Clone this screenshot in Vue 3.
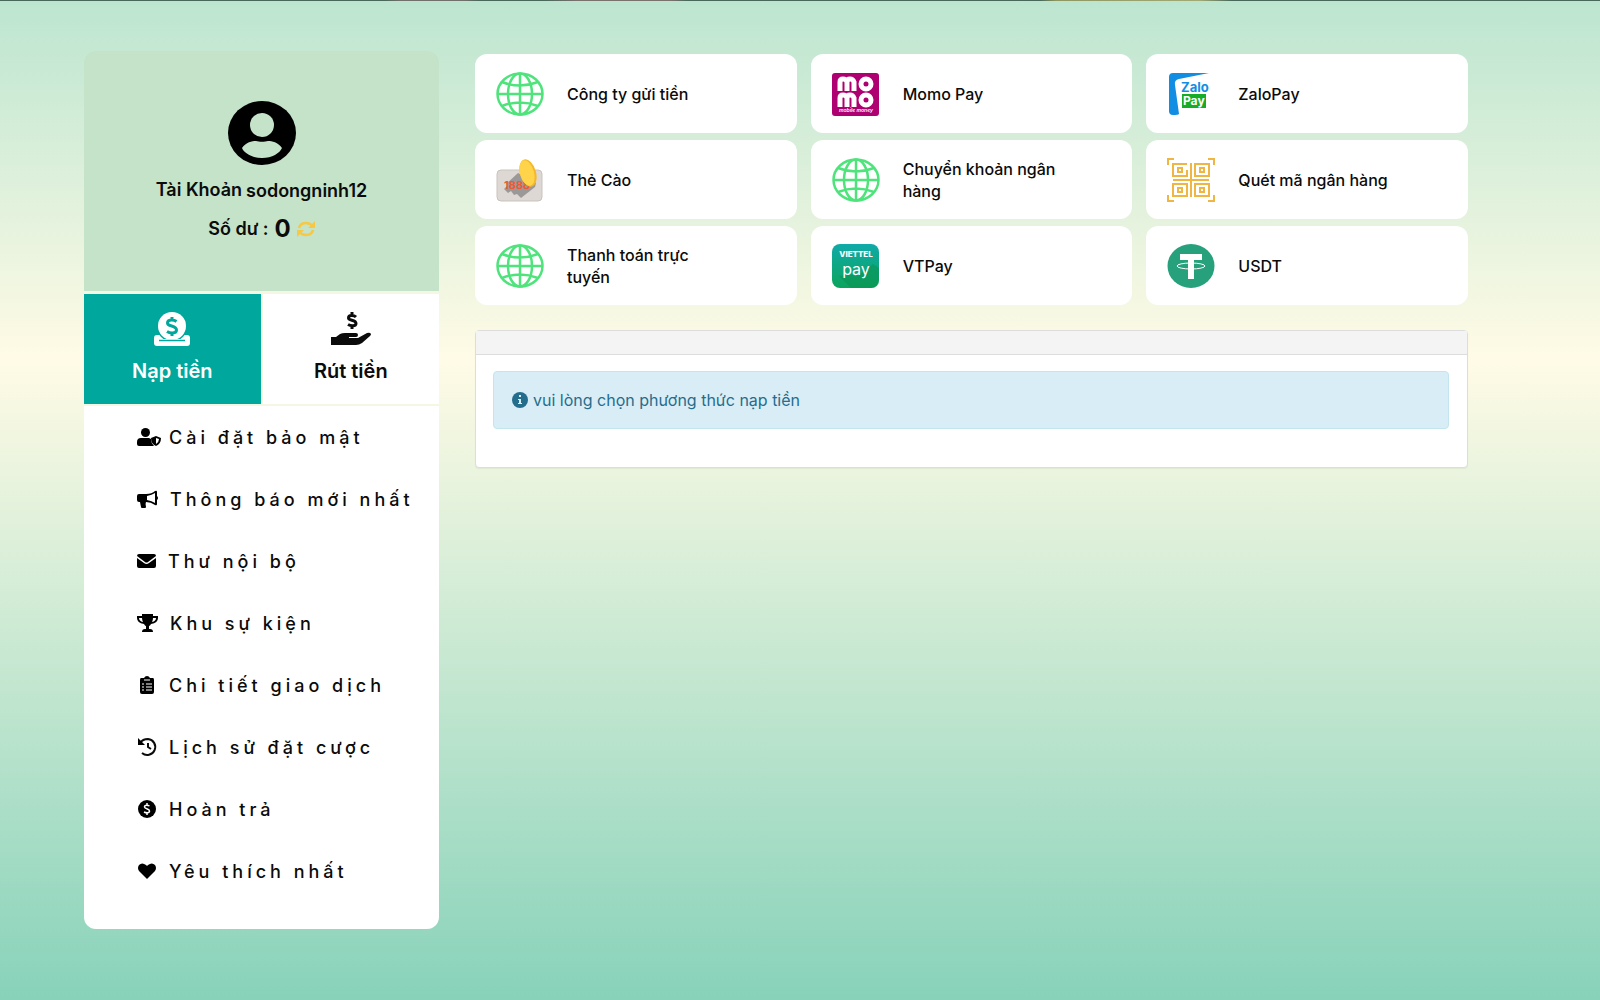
<script setup>
import { ref } from 'vue'

const methods = [
  { label: 'Công ty gửi tiền', icon: 'globe' },
  { label: 'Momo Pay', icon: 'momo' },
  { label: 'ZaloPay', icon: 'zalo' },
  { label: 'Thẻ Cào', icon: 'scratch' },
  { label: 'Chuyển khoản ngân hàng', icon: 'globe' },
  { label: 'Quét mã ngân hàng', icon: 'qr' },
  { label: 'Thanh toán trực tuyến', icon: 'globe' },
  { label: 'VTPay', icon: 'vtpay' },
  { label: 'USDT', icon: 'usdt' },
]

const menu = [
  { label: 'Cài đặt bảo mật', icon: 'shield' },
  { label: 'Thông báo mới nhất', icon: 'horn' },
  { label: 'Thư nội bộ', icon: 'mail' },
  { label: 'Khu sự kiện', icon: 'trophy' },
  { label: 'Chi tiết giao dịch', icon: 'clipboard' },
  { label: 'Lịch sử đặt cược', icon: 'history' },
  { label: 'Hoàn trả', icon: 'coin' },
  { label: 'Yêu thích nhất', icon: 'heart' },
]

const tab = ref('deposit')
</script>

<template>
  <div class="page">
    <div class="banner-edge"></div>
    <div class="layout">
      <aside class="sidebar">
        <section class="profile">
          <svg class="avatar" viewBox="0 0 68 64" aria-hidden="true">
            <ellipse cx="34" cy="32" rx="34" ry="32" />
            <circle class="cut" cx="34" cy="24" r="12" />
            <path class="cut" d="M14 47C18 41 24 40 28 40C31 41 37 41 40 40C44 40 50 41 54 47C52 52 44 57 34 57S16 52 14 47Z" />
          </svg>
          <div class="account"><span>Tài Khoản</span><span class="name">sodongninh12</span></div>
          <div class="balance">
            <span>Số dư :</span><strong>0</strong>
            <button class="reload" type="button" aria-label="Làm mới">
              <svg viewBox="0 0 18 16" fill="none" stroke="currentColor" stroke-width="2.500">
                <path d="M2 7C3 3 6 2 9 2C12 2 14 3 16 5.500M16 9C15 13 12 14 9 14C6 14 4 13 2 10.500" />
                <path d="M18 0V7H11ZM0 16V9H7Z" fill="currentColor" stroke="none" />
              </svg>
            </button>
          </div>
        </section>

        <div class="tabs">
          <button type="button" class="tab" :class="{ active: tab === 'deposit' }" @click="tab = 'deposit'">
            <svg viewBox="0 0 36 34" aria-hidden="true">
              <path d="M3 23H33Q36 23 36 26V31Q36 34 33 34H3Q0 34 0 31V26Q0 23 3 23Z" fill="currentColor" />
              <circle cx="18" cy="14" r="15.500" fill="#00a79d" />
              <path d="M3 27H33V34H3Z" fill="currentColor" />
              <circle cx="18" cy="14" r="14" fill="currentColor" />
              <path d="M5 28.500H31" stroke="#00a79d" stroke-width="1.500" />
              <path d="M22.500 9.500C20 7.500 13.500 7 13.500 11C13.500 15 22.500 13 22.500 18C22.500 22 16 21.500 13 19.500M18 5V8M18 20.500V24" fill="none" stroke="#00a79d" stroke-width="3" />
            </svg>
            <span>Nạp tiền</span>
          </button>
          <button type="button" class="tab" :class="{ active: tab === 'withdraw' }" @click="tab = 'withdraw'">
            <svg class="hand" viewBox="0 0 40 34" aria-hidden="true">
              <path d="M0 25H5L9 22Q11 21 14 21H25Q27 21 27 23T25 25H18V26H27L36 21Q39 20 40 22Q40 23 39 24L31 31Q28 33 25 33H0Z" fill="currentColor" />
              <path d="M25 5C23 3 17.500 2.500 17.500 6C17.500 9 25 7.500 25 11.500C25 14.500 19.500 14 17 12.500M21 0V3M21 13.500V17" fill="none" stroke="currentColor" stroke-width="3" />
            </svg>
            <span>Rút tiền</span>
          </button>
        </div>

        <nav class="menu">
          <a v-for="m in menu" :key="m.label" href="#" class="menu-link">
            <svg v-if="m.icon === 'shield'" width="20" height="18" viewBox="0 0 20 18">
              <circle cx="8.500" cy="4.500" r="4.500" />
              <path d="M4 10H12L14 11Q14 15 17 18H2Q0 18 0 16V14Q0 10 4 10Z" />
              <path d="M19 8L24 10Q24 16 19 18Q14 16 14 10ZM19 10V16Q22 14 22 11Z" fill-rule="evenodd" />
            </svg>
            <svg v-else-if="m.icon === 'horn'" width="21" height="18" viewBox="0 0 21 18">
              <path d="M2 4H9Q15 4 18 1Q20 0 20 2V6Q21 7 21 8T20 10V14Q20 16 18 15Q14 12 9 12Q8 14 9 17Q9 18 8 18H5Q4 18 4 17L3 12H2Q0 12 0 10V6Q0 4 2 4ZM10 6V10Q15 11 18 13V3Q15 5 10 6Z" fill-rule="evenodd" />
            </svg>
            <svg v-else-if="m.icon === 'mail'" width="19" height="18" viewBox="0 0 19 18">
              <path d="M2 2H17Q19 2 19 4L11 10Q9.500 11 8 10L0 4Q0 2 2 2ZM0 6L7 11Q9.500 13 12 11L19 6V14Q19 16 17 16H2Q0 16 0 14Z" />
            </svg>
            <svg v-else-if="m.icon === 'trophy'" width="21" height="18" viewBox="0 0 21 18">
              <path d="M5 0H16V2H21V4Q21 9 14 10Q13 12 12 12V15H13Q16 15 16 18H5Q5 15 8 15H9V12Q8 12 7 10Q0 9 0 4V2H5ZM2 4Q2 7 6 8Q5 6 5 4ZM19 4H16Q16 6 15 8Q19 7 19 4Z" fill-rule="evenodd" />
            </svg>
            <svg v-else-if="m.icon === 'clipboard'" width="20" height="18" viewBox="0 0 20 18">
              <path d="M4 2H7Q8 0 10 0T13 2H16Q17 2 17 4V16Q17 18 15 18H5Q3 18 3 16V4Q3 2 4 2Z" />
              <path d="M7 4H13M5 8H7M9 8H15M5 11H7M9 11H15M5 14H7M9 14H15" stroke="#fff" />
            </svg>
            <svg v-else-if="m.icon === 'history'" width="20" height="18" viewBox="0 0 20 18">
              <path d="M3 5C5 2 8 1 11 1A8 8 0 1 1 5 15M11 5V9L14 11" fill="none" stroke="#0b0b0b" stroke-width="2" />
              <path d="M1 0V7H8Z" />
            </svg>
            <svg v-else-if="m.icon === 'coin'" width="20" height="18" viewBox="0 0 20 18">
              <ellipse cx="10" cy="9" rx="9" ry="9" />
              <path d="M12.500 6C11 5 7.500 4.500 7.500 7C7.500 9 12.500 8.500 12.500 11C12.500 13.500 9 13 7 12M10 3V5M10 13V15" fill="none" stroke="#fff" stroke-width="1.500" />
            </svg>
            <svg v-else width="20" height="18" viewBox="0 0 20 18">
              <path d="M10 17L2 9Q0 6 2 3Q5 0 9 3L10 4L11 3Q15 0 18 3Q20 6 18 9Z" />
            </svg>
            <span>{{ m.label }}</span>
          </a>
        </nav>
      </aside>

      <main class="content">
        <div class="methods">
          <button v-for="p in methods" :key="p.label" type="button" class="method">
            <svg v-if="p.icon === 'globe'" viewBox="0 0 48 44" fill="none" stroke="#4fe37c" stroke-width="2.500">
              <ellipse cx="24" cy="22" rx="22.500" ry="20.500" />
              <ellipse cx="24" cy="22" rx="12" ry="20.500" />
              <path d="M24 1V43M1 22H47M6 10Q24 17 42 10M6 34Q24 27 42 34" />
            </svg>
            <svg v-else-if="p.icon === 'momo'" viewBox="0 0 48 44">
              <rect x="0" y="1" width="47" height="43" rx="3" fill="#ae0070" />
              <g fill="none" stroke="#fff" stroke-width="5">
                <path d="M8 19V10Q8 7 11 7T15 10V19M15 10Q15 7 18 7T22 10V19" />
                <ellipse cx="34" cy="12" rx="5" ry="5" />
                <path d="M8 35V26Q8 23 11 23T15 26V35M15 26Q15 23 18 23T22 26V35" />
                <ellipse cx="34" cy="28" rx="5" ry="5" />
              </g>
              <text x="24" y="40" text-anchor="middle" font-size="5" font-weight="600" font-style="italic" fill="#fff">mobile money</text>
            </svg>
            <svg v-else-if="p.icon === 'zalo'" viewBox="0 0 48 44">
              <path d="M6 1H42L12 7Q7 8 8 13L12 42Q11 43 6 43Q2 43 2 39V5Q2 1 6 1Z" fill="#118ee4" />
              <text x="14" y="20" font-size="13" font-weight="700" fill="#118ee4">Zalo</text>
              <rect x="15" y="22" width="24" height="14" fill="#15ad28" />
              <text x="16" y="33" font-size="12" font-weight="700" fill="#fff">Pay</text>
            </svg>
            <svg v-else-if="p.icon === 'scratch'" viewBox="0 0 48 44">
              <rect x="1" y="12" width="45" height="31" rx="4" fill="#ddd8d3" stroke="#c9c3bd" />
              <path d="M8 31L12 27L10 26L22 15L40 25L39 29L25 40L21 36L18 37L15 33L12 35Z" fill="#9b9998" />
              <text x="8" y="31" font-size="11" font-weight="700" fill="#ef5a32">1888</text>
              <ellipse cx="32" cy="15" rx="8" ry="14" fill="#f6b825" transform="rotate(-16 32 15)" />
              <ellipse cx="31" cy="15" rx="7" ry="13" fill="#ffd34a" transform="rotate(-16 31 15)" />
            </svg>
            <svg v-else-if="p.icon === 'qr'" viewBox="0 0 48 44" fill="none" stroke="#f0b643" stroke-width="2">
              <path d="M1 7V1H7M41 1H47V7M47 37V43H41M7 43H1V37M24 5V39M6 22H42" />
              <path d="M20 12V18H6V6H20M28 6H42V18H28ZM6 26H20V38H6ZM28 26H42V38H28Z" />
              <path d="M11 10H15V14H11ZM33 10H37V14H33ZM11 30H15V34H11ZM33 30H37V34H33Z" />
            </svg>
            <svg v-else-if="p.icon === 'vtpay'" viewBox="0 0 48 44">
              <defs>
                <linearGradient id="vt" x1="0" y1="0" x2="0" y2="1">
                  <stop offset="0" stop-color="#10aaa9" />
                  <stop offset="1" stop-color="#0ba45c" />
                </linearGradient>
              </defs>
              <rect width="47" height="44" rx="8" fill="url(#vt)" />
              <path d="M7 32L19 44H39Q47 44 47 36V24L41 20L28 30Z" fill="#078f50" opacity=".5" />
              <text x="24" y="13" text-anchor="middle" font-size="8" font-weight="800" fill="#fff">VIETTEL</text>
              <text x="24" y="31" text-anchor="middle" font-size="16" font-weight="400" fill="#fff">pay</text>
            </svg>
            <svg v-else viewBox="0 0 48 44">
              <ellipse cx="24" cy="22" rx="23.500" ry="22" fill="#26a17b" />
              <path d="M13 10H35V16H27V35H21V16H13Z" fill="#fff" />
              <ellipse cx="24" cy="22" rx="14" ry="3" fill="none" stroke="#fff" />
            </svg>
            <span>{{ p.label }}</span>
          </button>
        </div>

        <section class="panel">
          <header class="panel-head"></header>
          <div class="panel-body">
            <p class="notice">
              <svg viewBox="0 0 16 16" aria-hidden="true">
                <circle cx="8" cy="8" r="8" fill="#256d8c" />
                <path d="M7 3H9V5H7ZM6 7H9V11H10V12H6V11H7V8H6Z" fill="#d9edf7" />
              </svg>
              <span>vui lòng chọn phương thức nạp tiền</span>
            </p>
          </div>
        </section>
      </main>
    </div>
  </div>
</template>

<style>
body {
  margin: 0;
}
</style>

<style scoped>
.page {
  min-height: 100vh;
  box-sizing: border-box;
  background: linear-gradient(#bce5d0, #fffbe6 36%, #88d2ba);
  font-family: Inter, "Liberation Sans", Arial, sans-serif;
  color: #0b0b0b;
}
.banner-edge {
  height: 1px;
  background: linear-gradient(90deg, #47685a 24%, #71706a 25%, #71706a 29%, #47685a 30%, #47685a 34%, #78716c 36%, #78716c 42%, #47685a 43%, #47685a 65%, #8e9661 66%, #a1aa77 75%, #47685a 77%);
}
.layout {
  display: flex;
  align-items: flex-start;
  gap: 36px;
  padding: 50px 132px 0 84px;
}
button {
  font: inherit;
  color: inherit;
  border: 0;
  padding: 0;
  cursor: pointer;
}
.sidebar {
  flex: 0 0 355px;
  border-radius: 12px;
  overflow: hidden;
}
.profile {
  display: flex;
  flex-direction: column;
  align-items: center;
  box-sizing: border-box;
  height: 240px;
  padding-top: 50px;
  background: #c4e3c8;
  font-weight: 600;
}
.avatar {
  width: 68px;
  height: 64px;
  fill: #000;
}
.cut {
  fill: #c4e3c8;
}
.account {
  display: flex;
  gap: 4px;
  margin-top: 13px;
  font-size: 18px;
  line-height: 24px;
}
.name {
  padding-top: 1px;
}
.balance {
  display: flex;
  align-items: center;
  gap: 6px;
  margin-top: 12px;
  font-size: 18px;
  line-height: 28px;
}
.balance strong {
  font-size: 24px;
  font-weight: 700;
}
.reload {
  display: flex;
  background: none;
  color: #f7c843;
}
.reload svg {
  width: 18px;
  height: 16px;
}
.tabs {
  display: flex;
  gap: 2px;
  padding: 3px 0 2px;
  background: #f5f7e3;
}
.tab {
  flex: 1;
  display: flex;
  flex-direction: column;
  align-items: center;
  height: 110px;
  padding-top: 18px;
  background: #fff;
  font-size: 20px;
  font-weight: 600;
  line-height: 28px;
}
.tab.active {
  background: #00a79d;
  color: #fff;
}
.tab svg {
  width: 36px;
  height: 34px;
  margin-bottom: 11px;
}
.tab .hand {
  width: 40px;
}
.menu {
  padding: 0 0 27px;
  background: #fff;
}
.menu-link {
  display: flex;
  align-items: center;
  gap: 12px;
  height: 62px;
  padding-left: 53px;
  color: #0b0b0b;
  text-decoration: none;
  font-size: 18px;
  font-weight: 500;
  letter-spacing: 4px;
  white-space: nowrap;
}
.menu-link svg {
  flex: none;
  overflow: visible;
}
.content {
  flex: 1;
  min-width: 0;
  padding-top: 3px;
}
.methods {
  display: grid;
  grid-template-columns: repeat(3, 1fr);
  gap: 7px 14px;
}
.method {
  display: flex;
  align-items: center;
  gap: 23px;
  height: 79px;
  padding: 0 0 0 21px;
  border-radius: 12px;
  background: #fff;
  font-size: 16px;
  font-weight: 500;
  line-height: 22px;
  text-align: left;
}
.method svg {
  flex: none;
  width: 48px;
  height: 44px;
}
.method span {
  max-width: 160px;
}
.panel {
  margin-top: 25px;
  border: 1px solid #ddd;
  border-radius: 4px;
  background: #fff;
  box-shadow: 0 1px 1px rgba(0, 0, 0, 0.05);
}
.panel-head {
  height: 23px;
  border-bottom: 1px solid #ddd;
  background: #f4f4f4;
}
.panel-body {
  padding: 16px 18px 38px 17px;
}
.notice {
  display: flex;
  align-items: center;
  gap: 5px;
  box-sizing: border-box;
  height: 58px;
  margin: 0;
  padding: 0 18px;
  border: 1px solid #c3e6ee;
  border-radius: 4px;
  background: #d9edf7;
  color: #256d8c;
  font-size: 16px;
}
.notice svg {
  width: 16px;
  height: 16px;
}
</style>
